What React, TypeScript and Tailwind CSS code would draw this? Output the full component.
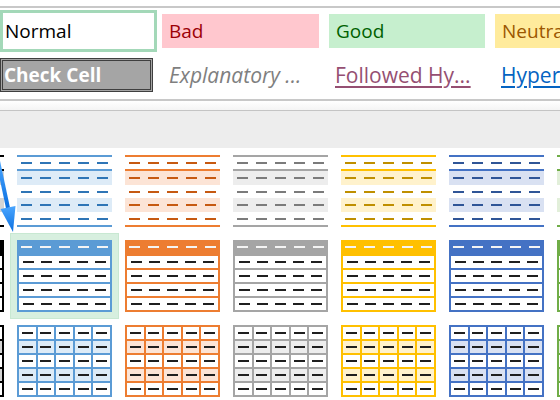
import React from 'react';

type Theme = { line: string; dash: string; band: string };

const themes: Theme[] = [
  { line: 'bg-[#000000]', dash: 'bg-[#000000]', band: 'bg-[#d4d4d4]' },
  { line: 'bg-[#5b9bd5]', dash: 'bg-[#2e75b6]', band: 'bg-[#ddebf7]' },
  { line: 'bg-[#ed7d31]', dash: 'bg-[#c65911]', band: 'bg-[#fce4d6]' },
  { line: 'bg-[#a5a5a5]', dash: 'bg-[#7b7b7b]', band: 'bg-[#ededed]' },
  { line: 'bg-[#ffc000]', dash: 'bg-[#bf8f00]', band: 'bg-[#fff2cc]' },
  { line: 'bg-[#4472c4]', dash: 'bg-[#2f5597]', band: 'bg-[#d9e1f2]' },
  { line: 'bg-[#70ad47]', dash: 'bg-[#548235]', band: 'bg-[#e2efda]' },
];

const Dashes = ({ cls }: { cls: string }) => (
  <div className="grid grid-cols-5 h-full items-center">
    {[0, 1, 2, 3, 4].map((i) => (
      <div key={i} className={`mx-auto w-[11px] h-[2px] ${cls}`} />
    ))}
  </div>
);

const lightRows = ['h-[14px]', 'h-[13px]', 'h-[14px]', 'h-[13px]'];

const LightTable = ({ t }: { t: Theme }) => (
  <div className="w-[95px] h-[72px] flex flex-col shrink-0">
    <div className={`h-[2px] ${t.line}`} />
    <div className="h-[12px]">
      <Dashes cls={t.dash} />
    </div>
    <div className={`h-[2px] ${t.line}`} />
    {lightRows.map((h, i) => (
      <div key={i} className={`${h} ${i % 2 === 0 ? t.band : 'bg-white'}`}>
        <Dashes cls={t.dash} />
      </div>
    ))}
    <div className={`h-[2px] ${t.line}`} />
  </div>
);

const MediumTable = ({ t }: { t: Theme }) => (
  <div className={`w-[95px] h-[72px] flex flex-col shrink-0 ${t.line}`}>
    <div className="h-[14px]">
      <Dashes cls="bg-[#f4f4f4]" />
    </div>
    <div className="flex-1 flex flex-col gap-[2px] p-[2px]">
      {[0, 1, 2, 3].map((i) => (
        <div key={i} className="flex-1 bg-white">
          <Dashes cls="bg-[#1f1f1f]" />
        </div>
      ))}
    </div>
  </div>
);

const GridTable = ({ t }: { t: Theme }) => (
  <div className={`w-[95px] h-[72px] grid grid-cols-5 grid-rows-5 gap-[2px] p-[2px] shrink-0 ${t.line}`}>
    {Array.from({ length: 25 }).map((_, i) => {
      const row = Math.floor(i / 5);
      return (
        <div key={i} className={`flex items-center justify-center ${row % 2 === 1 ? t.band : 'bg-white'}`}>
          <div className="w-[11px] h-[2px] bg-[#1f1f1f]" />
        </div>
      );
    })}
  </div>
);

const Arrow = () => (
  <svg className="absolute left-0 top-[155px] z-10" width="20" height="80" viewBox="0 0 20 80">
    <defs>
      <linearGradient id="ag" x1="0" y1="0" x2="0" y2="1">
        <stop offset="0" stopColor="#4aa6ff" />
        <stop offset="1" stopColor="#0a6fe0" />
      </linearGradient>
    </defs>
    <line x1="-2" y1="6" x2="8" y2="53" stroke="url(#ag)" strokeWidth="4" />
    <polygon points="0.5,54 15.5,51 13,77" fill="url(#ag)" />
  </svg>
);

export default function App() {
  return (
    <div className="relative w-[560px] h-[400px] overflow-hidden bg-white font-['Open_Sans',sans-serif] text-[19px] leading-none">
      <div className="h-[6px]" />
      <div className="h-[2px] bg-[#c8c8c8]" />
      <div className="h-[2px]" />

      {/* cell styles, first row */}
      <div className="flex items-center h-[42px] whitespace-nowrap">
        <div className="w-[157px] h-[42px] shrink-0 border-[3px] border-[#a3d8b8] flex items-center pl-[2px] text-black">
          Normal
        </div>
        <div className="ml-[5px] w-[157px] h-[34px] shrink-0 bg-[#ffc7ce] text-[#9c0006] flex items-center pl-[7px]">Bad</div>
        <div className="ml-[10px] w-[156px] h-[34px] shrink-0 bg-[#c6efce] text-[#006100] flex items-center pl-[7px]">Good</div>
        <div className="ml-[10px] w-[156px] h-[34px] shrink-0 bg-[#ffeb9c] text-[#9c5700] flex items-center pl-[7px]">Neutral</div>
      </div>

      <div className="h-[6px]" />

      {/* cell styles, second row */}
      <div className="flex items-center h-[34px] whitespace-nowrap">
        <div className="w-[153px] h-[34px] shrink-0 border-[3px] border-double border-[#3f3f3f] bg-[#a5a5a5] text-white font-bold flex items-center pl-[1px]">
          Check Cell
        </div>
        <div className="ml-[9px] w-[157px] shrink-0 italic text-[21px] text-[#7f7f7f] pl-[7px]">Explanatory ...</div>
        <div className="ml-[10px] w-[156px] shrink-0 text-[21px] text-[#954f72] underline underline-offset-[3px] pl-[6px]">Followed Hy...</div>
        <div className="ml-[10px] w-[156px] shrink-0 text-[21px] text-[#0563c1] underline underline-offset-[3px] pl-[6px]">Hyperlink</div>
      </div>

      <div className="h-[7px]" />
      <div className="h-[2px] bg-[#c8c8c8]" />
      <div className="h-[9px] bg-gradient-to-b from-white to-[#f4f4f4]" />
      <div className="h-[1px] bg-[#c4c4c4]" />
      <div className="h-[37px] bg-[#ededed]" />
      <div className="h-[7px]" />

      {/* table styles gallery */}
      <div className="ml-[-91px] flex flex-col gap-[13px]">
        <div className="flex gap-[13px]">
          {themes.map((t, i) => (
            <LightTable key={i} t={t} />
          ))}
        </div>
        <div className="flex gap-[13px]">
          {themes.map((t, i) =>
            i === 1 ? (
              <div key={i} className="-m-[7px] p-[6px] border border-[#c8e8d2] bg-[#d7efdf] shrink-0">
                <MediumTable t={t} />
              </div>
            ) : (
              <MediumTable key={i} t={t} />
            ),
          )}
        </div>
        <div className="flex gap-[13px]">
          {themes.map((t, i) => (
            <GridTable key={i} t={t} />
          ))}
        </div>
      </div>

      <Arrow />
    </div>
  );
}
